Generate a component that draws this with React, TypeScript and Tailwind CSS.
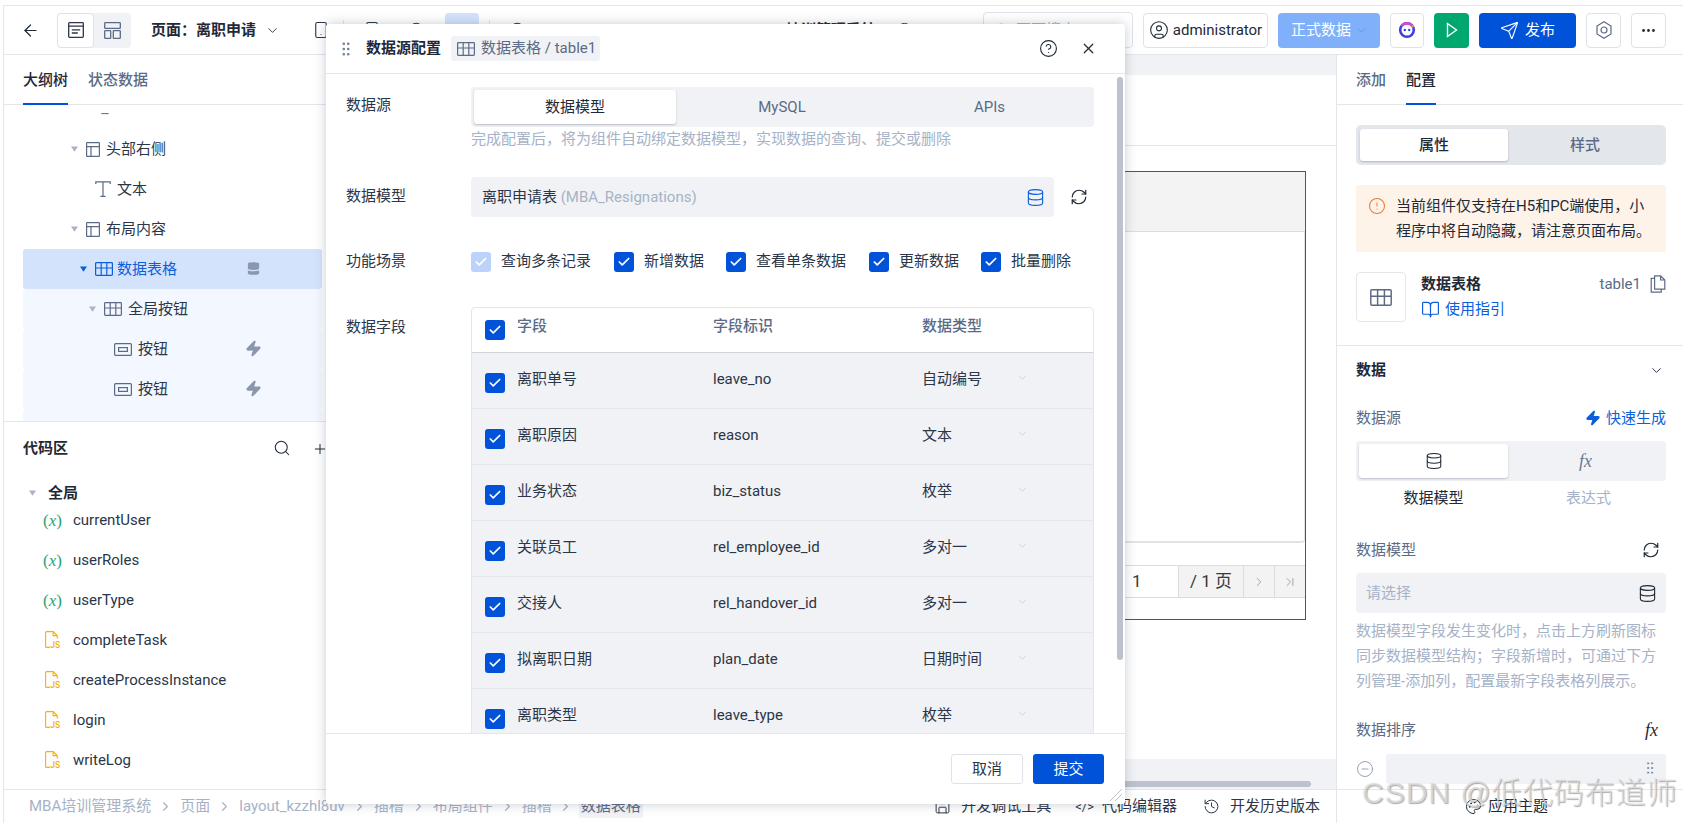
import {
  ArrowLeft,
  BookOpen,
  Check,
  ChevronDown,
  ChevronRight,
  CircleHelp,
  CircleAlert,
  CircleMinus,
  CircleUser,
  ChevronLast,
  Database,
  Ellipsis,
  GripVertical,
  History,
  Palette,
  Plus,
  RefreshCw,
  Save,
  Search,
  Send,
  Smartphone,
  X,
  Zap,
} from "lucide-react";

const font = 'font-["Roboto","Noto_Sans_CJK_SC",sans-serif]';

const GridIcon = ({ className = "" }: { className?: string }) => (
  <svg viewBox="0 0 18 14" fill="none" stroke="currentColor" strokeWidth="1.2" className={className}>
    <rect x="0.6" y="0.6" width="16.8" height="12.8" rx="0.8" />
    <path d="M0.6 6h16.8M6.2 0.6V13.4M11.8 0.6V13.4" />
  </svg>
);

const LayoutIcon = () => (
  <svg viewBox="0 0 14 15" fill="none" stroke="#5b6b86" strokeWidth="1.2" className="w-[14px] h-[15px] shrink-0">
    <rect x="0.6" y="0.6" width="12.8" height="13.8" rx="0.6" />
    <path d="M0.6 4.6h12.8M5 4.6v9.8" />
  </svg>
);

const ButtonIcon = () => (
  <svg viewBox="0 0 18 13" fill="none" stroke="#5b6b86" strokeWidth="1.2" className="w-[18px] h-[13px] shrink-0">
    <rect x="0.6" y="0.6" width="16.8" height="11.8" rx="1" />
    <rect x="4.6" y="4.6" width="8.8" height="3.8" />
  </svg>
);

const TextIcon = () => (
  <svg viewBox="0 0 16 16" fill="none" stroke="#5b6b86" strokeWidth="1.2" className="w-[16px] h-[16px] shrink-0">
    <path d="M0.8 3V0.8h14.4V3M8 0.8v14.6M5.4 15.4h5.2" />
  </svg>
);

const DocIcon = () => (
  <svg viewBox="0 0 16 16" fill="none" stroke="#2b3648" strokeWidth="1.3" className="w-[16px] h-[16px]">
    <rect x="0.7" y="0.7" width="14.6" height="14.6" rx="0.8" />
    <path d="M0.7 4.2h14.6M3.8 7.8h8.4M3.8 11h6" />
  </svg>
);

const PanelsIcon = () => (
  <svg viewBox="0 0 17 17" fill="none" stroke="#5b6b86" strokeWidth="1.3" className="w-[17px] h-[17px]">
    <rect x="0.7" y="0.7" width="15.6" height="5.6" rx="0.6" />
    <rect x="0.7" y="8.7" width="6" height="7.6" rx="0.6" />
    <rect x="9.3" y="8.7" width="7" height="7.6" rx="0.6" />
  </svg>
);

const Caret = ({ className = "text-[#a9b4c6]" }: { className?: string }) => (
  <svg viewBox="0 0 8 6" className={`w-[7px] h-[6px] shrink-0 ${className}`} fill="currentColor">
    <path d="M0 0h8L4 6z" />
  </svg>
);

const Checkbox = ({ muted = false }: { muted?: boolean }) => (
  <span
    className={`w-[20px] h-[20px] rounded-[3px] flex items-center justify-center shrink-0 ${
      muted ? "bg-[#bbd3fb]" : "bg-[#0052d9]"
    }`}
  >
    <Check size={14} strokeWidth={3} className="text-white" />
  </span>
);

const JsIcon = () => (
  <svg viewBox="0 0 16 18" className="w-[16px] h-[18px] shrink-0" fill="none">
    <path d="M5 16.4H1.6a1 1 0 0 1-1-1V1.6a1 1 0 0 1 1-1h6.6l4 4v3" stroke="#f5b100" strokeWidth="1.1" />
    <path d="M8.2 0.6v4h4" stroke="#f5b100" strokeWidth="1.1" />
    <text x="5.2" y="16.8" fontSize="8.5" fontWeight="500" fill="#f5b100" fontFamily="Roboto, sans-serif">
      JS
    </text>
  </svg>
);

const VarIcon = () => (
  <span className="w-[20px] text-[#2ba471] text-[17px] leading-none whitespace-nowrap font-['Liberation_Serif',serif] shrink-0">
    (<i>x</i>)
  </span>
);

const TreeRow = ({
  pad,
  caret,
  icon,
  label,
  right,
  tint,
  active,
}: {
  pad: string;
  caret?: boolean;
  icon: React.ReactNode;
  label: string;
  right?: React.ReactNode;
  tint?: boolean;
  active?: boolean;
}) => (
  <div
    className={`h-[40px] w-[299px] ml-[19px] flex items-center relative rounded-[3px] ${pad} ${
      active ? "bg-[#d4e3fc] text-[#0b5fdc]" : tint ? "bg-[#f3f7ff] text-[#2b3648]" : "text-[#2b3648]"
    }`}
  >
    {caret && <Caret className={active ? "text-[#0b5fdc] mr-[8px]" : "text-[#a9b4c6] mr-[8px]"} />}
    {icon}
    <span className={`text-[15px] ${active ? "ml-[4px]" : "ml-[6px]"}`}>{label}</span>
    {right && <span className="absolute left-[222px] top-[11px]">{right}</span>}
  </div>
);

const CodeRow = ({ icon, label }: { icon: React.ReactNode; label: string }) => (
  <div className="h-[40px] flex items-center text-[15px] text-[#2b3648]">
    <span className="w-[20px] ml-[39px] flex justify-center">{icon}</span>
    <span className="ml-[10px]">{label}</span>
  </div>
);

const ToolBtn = ({ children, className = "" }: { children: React.ReactNode; className?: string }) => (
  <div
    className={`h-[35px] rounded-[4px] border border-[#dfe2e8] bg-white flex items-center justify-center shrink-0 ${className}`}
  >
    {children}
  </div>
);

const fields = [
  ["离职单号", "leave_no", "自动编号"],
  ["离职原因", "reason", "文本"],
  ["业务状态", "biz_status", "枚举"],
  ["关联员工", "rel_employee_id", "多对一"],
  ["交接人", "rel_handover_id", "多对一"],
  ["拟离职日期", "plan_date", "日期时间"],
  ["离职类型", "leave_type", "枚举"],
];

const Crumb = ({ label, first }: { label: string; first?: boolean }) => (
  <>
    {!first && <ChevronRight size={15} className="text-[#a9b4c6] mx-[7px]" />}
    <span>{label}</span>
  </>
);

const DataSourceModal = () => (
  <div className="absolute left-[326px] top-[24px] w-[799px] h-[780px] bg-white flex flex-col shadow-[0_0_12px_rgba(60,70,90,0.28)] rounded-[3px] text-[15px] text-[#2b3648]">
    <div className="h-[50px] shrink-0 border-b border-[#e3e6eb] flex items-center relative">
      <GripVertical size={18} className="ml-[11px] text-[#6b7a93]" strokeWidth={1.5} />
      <span className="ml-[11px] font-semibold text-[#1f2937]">数据源配置</span>
      <div className="ml-[10px] h-[25px] w-[149px] bg-[#f1f2f5] rounded-[3px] flex items-center pl-[6px] text-[#5b6b86]">
        <GridIcon className="w-[18px] h-[14px] shrink-0" />
        <span className="ml-[6px] whitespace-nowrap">数据表格 / table1</span>
      </div>
      <CircleHelp size={19} strokeWidth={1.4} className="ml-[439px] text-[#1f2937]" />
      <X size={17} strokeWidth={1.8} className="ml-[22px] text-[#1f2937]" />
    </div>

    <div className="flex-1 overflow-hidden relative pl-[20px] pt-[13px]">
      <div className="absolute right-[2px] top-[3px] w-[6px] h-[583px] rounded-[3px] bg-[#bcc3ce]" />

      <div className="flex">
        <span className="w-[125px] leading-[36px]">数据源</span>
        <div className="w-[623px]">
          <div className="h-[40px] bg-[#f1f2f5] rounded-[4px] p-[3px] flex text-[#5b6b86]">
            <div className="w-[202px] bg-white rounded-[3px] shadow-[0_1px_2px_rgba(80,90,110,0.35)] flex items-center justify-center text-[#1f2937]">
              数据模型
            </div>
            <div className="w-[212px] flex items-center justify-center">MySQL</div>
            <div className="flex-1 flex items-center justify-center">APIs</div>
          </div>
          <p className="h-[25px] text-[#a6b2c7] leading-[24px]">完成配置后，将为组件自动绑定数据模型，实现数据的查询、提交或删除</p>
        </div>
      </div>

      <div className="flex mt-[25px] items-center">
        <span className="w-[125px] -mt-[2px]">数据模型</span>
        <div className="w-[583px] h-[40px] bg-[#f1f2f5] rounded-[4px] flex items-center justify-between pl-[11px] pr-[9px]">
          <span>
            离职申请表 <span className="text-[#a6b2c7]">(MBA_Resignations)</span>
          </span>
          <Database size={19} strokeWidth={1.4} className="text-[#0b5fdc]" />
        </div>
        <RefreshCw size={18} strokeWidth={1.6} className="ml-[16px] text-[#1f2937]" />
      </div>

      <div className="flex mt-[35px] items-center h-[20px]">
        <span className="w-[125px] -mt-[2px]">功能场景</span>
        <Checkbox muted />
        <span className="ml-[10px] w-[113px] -mt-[2px]">查询多条记录</span>
        <Checkbox />
        <span className="ml-[10px] w-[82px] -mt-[2px]">新增数据</span>
        <Checkbox />
        <span className="ml-[10px] w-[113px] -mt-[2px]">查看单条数据</span>
        <Checkbox />
        <span className="ml-[10px] w-[82px] -mt-[2px]">更新数据</span>
        <Checkbox />
        <span className="ml-[10px] -mt-[2px]">批量删除</span>
      </div>

      <div className="flex mt-[35px]">
        <span className="w-[125px] leading-[40px]">数据字段</span>
        <div className="w-[623px] border border-[#e3e6eb] rounded-[4px]">
          <div className="h-[45px] flex items-start border-b border-[#cfd4dc] text-[#5b6b86] font-medium">
            <span className="ml-[13px] mt-[12px]">
              <Checkbox />
            </span>
            <span className="ml-[12px] w-[196px] mt-[7px]">字段</span>
            <span className="w-[209px] mt-[7px]">字段标识</span>
            <span className="mt-[7px]">数据类型</span>
          </div>
          {fields.map(([name, key, type]) => (
            <div key={key} className="h-[56px] bg-[#f1f2f5] border-b border-[#e3e6eb] flex items-start">
              <span className="ml-[13px] mt-[20px]">
                <Checkbox />
              </span>
              <span className="ml-[12px] w-[196px] mt-[15px]">{name}</span>
              <span className="w-[209px] mt-[15px]">{key}</span>
              <span className="w-[94px] mt-[15px]">{type}</span>
              <ChevronDown size={13} strokeWidth={1.2} className="mt-[18px] text-[#b6bfcc]" />
            </div>
          ))}
        </div>
      </div>
    </div>

    <div className="h-[71px] shrink-0 border-t border-[#e3e6eb] flex justify-end items-center pr-[21px] relative">
      <div className="w-[72px] h-[30px] border border-[#dfe2e8] rounded-[3px] flex items-center justify-center">取消</div>
      <div className="w-[71px] h-[30px] ml-[10px] bg-[#0052d9] rounded-[3px] text-white flex items-center justify-center">提交</div>
      <svg viewBox="0 0 14 14" className="absolute right-[2px] bottom-[2px] w-[14px] h-[14px]" stroke="#b6bfcc" fill="none">
        <path d="M1 13 13 1M6 13l7-7" />
      </svg>
    </div>
  </div>
);

const RightPanel = () => (
  <div className="w-[347px] shrink-0 border-l border-[#e3e6eb] overflow-hidden text-[15px] text-[#2b3648]">
    <div className="h-[50px] border-b border-[#e3e6eb] flex pl-[19px] font-medium">
      <span className="mt-[14px] text-[#5b6b86]">添加</span>
      <span className="ml-[20px] h-[50px] pt-[14px] border-b-[2px] border-[#0052d9] text-[#1f2937]">配置</span>
    </div>
    <div className="pl-[19px] pr-[17px]">
      <div className="mt-[20px] h-[40px] bg-[#e3e6eb] rounded-[5px] p-[4px] flex font-medium text-[#5b6b86]">
        <div className="w-[148px] bg-white rounded-[3px] shadow-[0_1px_2px_rgba(80,90,110,0.35)] flex items-center justify-center text-[#1f2937]">
          属性
        </div>
        <div className="flex-1 flex items-center justify-center">样式</div>
      </div>
      <div className="mt-[20px] h-[67px] bg-[#fef3e8] rounded-[3px] flex pl-[12px] pt-[9px] text-[#1f2937] leading-[25px]">
        <CircleAlert size={18} strokeWidth={1.4} className="text-[#ed7b2f] mt-[3px] shrink-0" />
        <p className="ml-[10px] w-[262px]">当前组件仅支持在H5和PC端使用，小程序中将自动隐藏，请注意页面布局。</p>
      </div>
      <div className="mt-[20px] h-[50px] flex">
        <div className="w-[50px] h-[50px] border border-[#e3e6eb] rounded-[4px] flex items-center justify-center text-[#5b6b86]">
          <GridIcon className="w-[22px] h-[17px]" />
        </div>
        <div className="flex-1 ml-[15px]">
          <div className="flex items-center h-[24px] justify-between">
            <span className="font-semibold text-[#1f2937]">数据表格</span>
            <span className="flex items-center text-[#5b6b86]">
              table1
              <svg viewBox="0 0 16 18" fill="none" stroke="#5b6b86" strokeWidth="1.2" className="ml-[9px] w-[16px] h-[18px]">
                <path d="M4.6 0.8h6l4.2 4.2v9.2H4.6zM10.6 0.8V5h4.2M4.6 3.4H1.2v13.8h10v-3" />
              </svg>
            </span>
          </div>
          <div className="flex items-center h-[26px] text-[#0b5fdc]">
            <BookOpen size={19} strokeWidth={1.5} />
            <span className="ml-[5px]">使用指引</span>
          </div>
        </div>
      </div>
    </div>
    <div className="mt-[23px] border-t border-[#e3e6eb] pl-[19px] pr-[17px]">
      <div className="h-[48px] flex items-center justify-between">
        <span className="font-semibold text-[#1f2937]">数据</span>
        <ChevronDown size={15} strokeWidth={1.6} className="mr-[2px]" />
      </div>
      <div className="mt-[12px] h-[24px] flex items-center justify-between">
        <span className="text-[#5b6b86]">数据源</span>
        <span className="flex items-center text-[#0b5fdc]">
          <Zap size={16} fill="#0b5fdc" className="mr-[5px]" />
          快速生成
        </span>
      </div>
      <div className="mt-[11px] h-[40px] bg-[#f1f2f5] rounded-[4px] p-[3px] flex">
        <div className="w-[149px] bg-white rounded-[3px] shadow-[0_1px_2px_rgba(80,90,110,0.35)] flex items-center justify-center">
          <Database size={18} strokeWidth={1.4} className="text-[#1f2937]" />
        </div>
        <div className="flex-1 flex items-center justify-center text-[#6b7a93] text-[18px] italic font-['Liberation_Serif',serif]">fx</div>
      </div>
      <div className="flex h-[34px] items-center text-center">
        <span className="w-[155px] text-[#1f2937]">数据模型</span>
        <span className="flex-1 text-[#a6b2c7]">表达式</span>
      </div>
      <div className="mt-[23px] h-[24px] flex items-center justify-between">
        <span className="text-[#5b6b86]">数据模型</span>
        <RefreshCw size={18} strokeWidth={1.6} className="mr-[6px] text-[#1f2937]" />
      </div>
      <div className="mt-[11px] h-[40px] bg-[#f1f2f5] rounded-[4px] flex items-center justify-between pl-[10px] pr-[9px]">
        <span className="text-[#a6b2c7]">请选择</span>
        <Database size={19} strokeWidth={1.4} className="text-[#1f2937]" />
      </div>
      <p className="mt-[6px] leading-[25px] text-[#a6b2c7]">
        数据模型字段发生变化时，点击上方刷新图标同步数据模型结构；字段新增时，可通过下方列管理-添加列，配置最新字段表格列展示。
      </p>
      <div className="mt-[24px] h-[24px] flex items-center justify-between">
        <span className="text-[#5b6b86]">数据排序</span>
        <span className="italic mr-[8px] text-[18px] font-['Liberation_Serif',serif] text-[#1f2937]">fx</span>
      </div>
      <div className="mt-[12px] flex items-center">
        <CircleMinus size={18} strokeWidth={1.2} className="text-[#8a97ad]" />
        <div className="ml-[12px] flex-1 h-[30px] bg-[#f1f2f5] rounded-[3px] flex justify-end pr-[8px] pt-[6px]">
          <GripVertical size={16} strokeWidth={1.2} className="text-[#6b7a93]" />
        </div>
      </div>
    </div>
  </div>
);

export default function App() {
  return (
    <div className={`${font} relative w-[1683px] h-[823px] overflow-hidden bg-white pt-[5px] pl-[3px]`}>
      <div className="h-full border-l border-t border-[#e3e6eb] flex flex-col">
        {/* top toolbar */}
        <div className="h-[49px] shrink-0 border-b border-[#e3e6eb] flex items-center text-[15px] text-[#2b3648]">
          <ArrowLeft size={19} strokeWidth={1.5} className="ml-[17px] text-[#1f2937]" />
          <div className="ml-[17px] w-[74px] h-[35px] bg-[#f1f2f5] rounded-[4px] flex shrink-0">
            <div className="w-[37px] bg-white border border-[#dfe2e8] rounded-[4px] flex items-center justify-center">
              <DocIcon />
            </div>
            <div className="flex-1 flex items-center justify-center">
              <PanelsIcon />
            </div>
          </div>
          <span className="ml-[20px] font-semibold text-[#1f2937]">页面：离职申请</span>
          <ChevronDown size={15} strokeWidth={1.5} className="ml-[9px]" />
          <Smartphone size={18} strokeWidth={1.5} className="ml-[32px]" />
          <div className="ml-[13px] w-[1px] h-[20px] bg-[#e3e6eb]" />
          <Smartphone size={18} strokeWidth={1.5} className="ml-[19px]" />
          <Search size={18} strokeWidth={1.5} className="ml-[27px]" />
          <div className="ml-[19px] w-[34px] h-[35px] bg-[#d4e3fc] rounded-[4px] shrink-0" />
          <div className="ml-[10px] w-[1px] h-[20px] bg-[#e3e6eb]" />
          <Search size={18} strokeWidth={1.5} className="ml-[19px]" />
          <span className="ml-[259px] font-semibold text-[#1f2937] whitespace-nowrap">培训管理系统</span>
          <CircleHelp size={17} strokeWidth={1.4} className="ml-[20px]" />
          <ChevronDown size={14} className="ml-[16px]" />
          <div className="ml-[40px] w-[150px] h-[36px] border border-[#dfe2e8] rounded-[4px] flex items-center pl-[10px] text-[#a6b2c7] shrink-0">
            <Search size={16} strokeWidth={1.5} />
            <span className="ml-[6px]">页面搜索</span>
          </div>
          <ToolBtn className="ml-[10px] w-[125px]">
            <CircleUser size={20} strokeWidth={1.3} className="text-[#1f2937]" />
            <span className="ml-[4px] text-[#1f2937]">administrator</span>
          </ToolBtn>
          <div className="ml-[10px] w-[102px] h-[35px] rounded-[4px] bg-[#7fb0f9] text-white flex items-center pl-[13px] shrink-0">
            正式数据
            <ChevronDown size={13} strokeWidth={1.3} className="ml-[4px] text-[#5b8fdc]" />
          </div>
          <ToolBtn className="ml-[10px] w-[34px]">
            <svg viewBox="0 0 20 20" className="w-[20px] h-[20px]">
              <circle cx="10" cy="10" r="6.8" fill="none" stroke="#3b3fe4" strokeWidth="2.6" />
              <path d="M4.5 6a6.8 6.8 0 0 1 11 0" fill="none" stroke="#d24ccf" strokeWidth="2.6" />
              <path d="M15.6 5.4a6.8 6.8 0 0 1 0.6 2" fill="none" stroke="#f09040" strokeWidth="2.6" />
              <circle cx="7.8" cy="10" r="1.2" fill="#3b3fe4" />
              <circle cx="12.2" cy="10" r="1.2" fill="#3b3fe4" />
            </svg>
          </ToolBtn>
          <div className="ml-[10px] w-[35px] h-[35px] rounded-[4px] bg-[#00a870] flex items-center justify-center shrink-0">
            <svg viewBox="0 0 12 16" fill="none" stroke="#fff" strokeWidth="1.4" className="w-[12px] h-[16px]">
              <path d="M1.5 1.5v13L10.5 8z" />
            </svg>
          </div>
          <div className="ml-[10px] w-[97px] h-[35px] rounded-[4px] bg-[#0052d9] text-white flex items-center justify-center shrink-0">
            <Send size={19} strokeWidth={1.5} />
            <span className="ml-[6px]">发布</span>
          </div>
          <ToolBtn className="ml-[10px] w-[35px]">
            <svg viewBox="0 0 16 18" fill="none" stroke="#5b6b86" strokeWidth="1.2" className="w-[16px] h-[18px]">
              <path d="M8 0.8 15 5v8l-7 4.2L1 13V5z" />
              <circle cx="8" cy="9" r="3" />
            </svg>
          </ToolBtn>
          <ToolBtn className="ml-[10px] w-[35px]">
            <Ellipsis size={17} className="text-[#1f2937]" />
          </ToolBtn>
        </div>

        <div className="flex-1 flex min-h-0">
          {/* left panel */}
          <div className="w-[322px] shrink-0 flex flex-col text-[15px]">
            <div className="h-[50px] shrink-0 border-b border-[#e3e6eb] flex pl-[19px] font-medium">
              <span className="h-[50px] pt-[14px] border-b-[2px] border-[#0052d9] text-[#1f2937]">大纲树</span>
              <span className="ml-[20px] mt-[14px] text-[#5b6b86]">状态数据</span>
            </div>
            <div className="h-[317px] shrink-0 overflow-hidden border-b border-[#e3e6eb]">
              <div className="h-[24px] pl-[96px] pt-[2px] text-[#6b7a93] leading-none">–</div>
              <TreeRow pad="pl-[48px]" caret icon={<LayoutIcon />} label="头部右侧" />
              <TreeRow pad="pl-[72px]" icon={<TextIcon />} label="文本" />
              <TreeRow pad="pl-[48px]" caret icon={<LayoutIcon />} label="布局内容" />
              <TreeRow
                pad="pl-[57px]"
                caret
                active
                icon={<GridIcon className="w-[18px] h-[14px] shrink-0" />}
                label="数据表格"
                right={<Database size={17} fill="#8a97ad" className="text-[#d4e3fc]" />}
              />
              <TreeRow pad="pl-[66px]" caret tint icon={<GridIcon className="w-[18px] h-[14px] shrink-0 text-[#5b6b86]" />} label="全局按钮" />
              <TreeRow
                pad="pl-[91px]"
                tint
                icon={<ButtonIcon />}
                label="按钮"
                right={<Zap size={17} fill="#8a97ad" className="text-[#8a97ad]" />}
              />
              <TreeRow
                pad="pl-[91px]"
                tint
                icon={<ButtonIcon />}
                label="按钮"
                right={<Zap size={17} fill="#8a97ad" className="text-[#8a97ad]" />}
              />
              <TreeRow pad="pl-[91px]" tint icon={<span />} label="" />
            </div>
            <div className="h-[52px] shrink-0 flex items-center pl-[19px] relative">
              <span className="font-semibold text-[#1f2937]">代码区</span>
              <Search size={18} strokeWidth={1.4} className="absolute left-[269px] top-[17px] text-[#1f2937]" />
            </div>
            <div className="h-[26px] pt-[12px] pl-[25px] flex items-center shrink-0">
              <Caret />
              <span className="ml-[12px] font-semibold text-[#1f2937]">全局</span>
            </div>
            <CodeRow icon={<VarIcon />} label="currentUser" />
            <CodeRow icon={<VarIcon />} label="userRoles" />
            <CodeRow icon={<VarIcon />} label="userType" />
            <CodeRow icon={<JsIcon />} label="completeTask" />
            <CodeRow icon={<JsIcon />} label="createProcessInstance" />
            <CodeRow icon={<JsIcon />} label="login" />
            <CodeRow icon={<JsIcon />} label="writeLog" />
          </div>

          {/* canvas */}
          <div className="flex-1 min-w-0 flex flex-col">
            <div className="h-[20px] shrink-0 bg-[#f1f2f5]" />
            <div className="h-[71px] shrink-0 border-b border-[#e3e6eb]" />
            <div className="h-[474px] shrink-0 pt-[25px] pl-[20px] pr-[30px]">
              <div className="h-[449px] border border-[#0b5fdc] flex flex-col">
                <div className="h-[60px] shrink-0 bg-[#f3f3f3] border-b border-[#dcdcdc]" />
                <div className="h-[311px] shrink-0 border-b-[2px] border-r border-[#e3e3e3] rounded-br-[4px]" />
                <div className="mt-[22px] h-[33px] flex justify-end text-[#3a3a3a] border-y border-[#dcdcdc]">
                  <span className="w-[60px] pl-[14px] flex items-center text-[17px]">1</span>
                  <span className="w-[66px] bg-[#f3f3f3] border-x border-[#dcdcdc] flex items-center justify-center text-[17px] whitespace-nowrap">
                    / 1 页
                  </span>
                  <span className="w-[31px] bg-[#f3f3f3] border-r border-[#dcdcdc] flex items-center justify-center">
                    <ChevronRight size={14} strokeWidth={1.3} className="text-[#8a8a8a]" />
                  </span>
                  <span className="w-[30px] bg-[#f3f3f3] flex items-center justify-center">
                    <ChevronLast size={14} strokeWidth={1.3} className="text-[#8a8a8a]" />
                  </span>
                </div>
              </div>
            </div>
            <div className="flex-1 min-h-0 bg-white" />
            <div className="h-[30px] shrink-0 bg-[#f1f2f5] pt-[22px]">
              <div className="h-[6px] mr-[25px] bg-[#bcc3ce] rounded-[3px]" />
            </div>
          </div>

          <RightPanel />
        </div>

        {/* bottom bar */}
        <div className="h-[34px] shrink-0 border-t border-[#e3e6eb] flex items-center text-[15px]">
          <div className="flex items-center pl-[25px] text-[#a6b2c7] whitespace-nowrap">
            <Crumb first label="MBA培训管理系统" />
            <Crumb label="页面" />
            <Crumb label="layout_kzzhl8uv" />
            <Crumb label="插槽" />
            <Crumb label="布局组件" />
            <Crumb label="插槽" />
            <ChevronRight size={15} className="text-[#a9b4c6] mx-[6px]" />
            <span className="bg-[#f1f2f5] text-[#5b6b86] px-[2px]">数据表格</span>
          </div>
          <div className="flex-1" />
          <div className="flex items-center text-[#2b3648] whitespace-nowrap">
            <Save size={17} strokeWidth={1.4} />
            <span className="ml-[10px]">开发调试工具</span>
            <span className="ml-[24px] text-[13px]">{"</>"}</span>
            <span className="ml-[8px]">代码编辑器</span>
            <History size={17} strokeWidth={1.4} className="ml-[26px]" />
            <span className="ml-[10px]">开发历史版本</span>
          </div>
          <div className="ml-[16px] w-[347px] h-full border-l border-[#e3e6eb] flex items-center pl-[128px] text-[#1f2937] shrink-0">
            <Palette size={17} strokeWidth={1.4} />
            <span className="ml-[6px]">应用主题</span>
          </div>
        </div>
      </div>

      {/* overlays */}
      <Plus size={16} strokeWidth={1.5} className="absolute left-[312px] top-[441px] text-[#1f2937]" />
      <DataSourceModal />
      <span className="absolute left-[1362px] top-[773px] text-[30px] leading-[40px] tracking-[1px] text-[#dcdcdc]/80 whitespace-nowrap font-['Liberation_Sans','Noto_Sans_CJK_SC',sans-serif] font-light [text-shadow:1px_1px_1px_rgba(90,90,90,0.5)]">
        CSDN @低代码布道师
      </span>
    </div>
  );
}
